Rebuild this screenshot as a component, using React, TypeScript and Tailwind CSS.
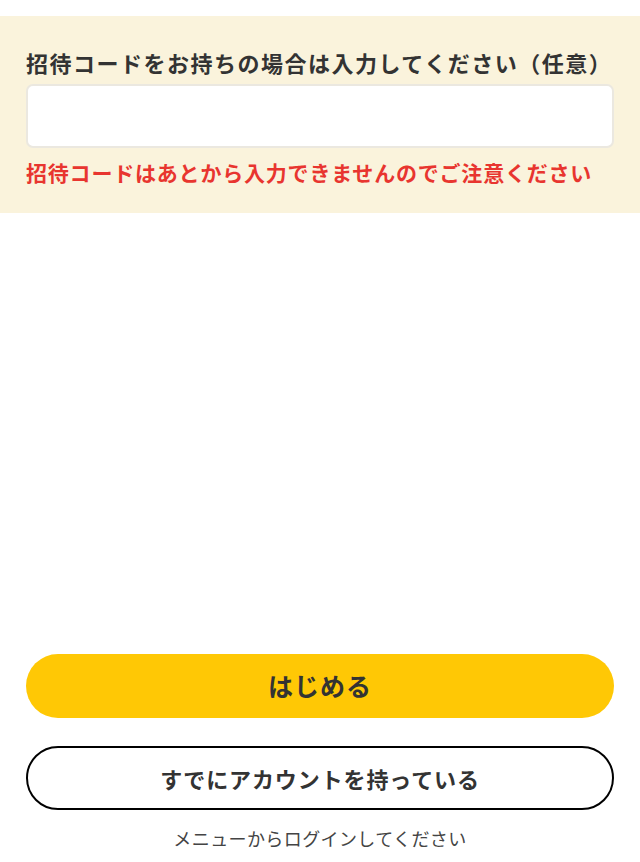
import { useState } from 'react';

export default function App() {
  const [code, setCode] = useState('');

  return (
    <div
      className="flex h-[862px] flex-col bg-white text-[#333333]"
      style={{ fontFamily: '"Noto Sans CJK JP", "Noto Sans", sans-serif' }}
    >
      <section className="mt-4 bg-[#faf3dc] px-[26px] pt-[30px] pb-[25px]">
        <label htmlFor="invite" className="block text-[22px] leading-[32px] font-bold tracking-[1.5px] text-[#333333]">
          招待コードをお持ちの場合は入力してください（任意）
        </label>
        <input
          id="invite"
          type="text"
          value={code}
          onChange={(e) => setCode(e.target.value)}
          className="mt-[6px] block h-16 w-full rounded-[7px] border-2 border-[#ebe8e0] bg-white px-4 text-[20px] outline-none"
        />
        <p className="mt-2 text-[21px] leading-[32px] font-bold tracking-[0.8px] text-[#e8352f]">
          招待コードはあとから入力できませんのでご注意ください
        </p>
      </section>

      <div className="flex-1" />

      <div className="px-[26px] pb-3">
        <button className="flex h-16 w-full items-center justify-center rounded-full bg-[#ffc805] text-[25px] font-bold tracking-[1px] text-[#333333]">
          はじめる
        </button>
        <button className="mt-7 flex h-16 w-full items-center justify-center rounded-full border-2 border-black bg-white text-[22px] font-bold tracking-[0.9px] text-[#333333]">
          すでにアカウントを持っている
        </button>
        <p className="mt-4 text-center text-[18px] leading-6 tracking-[0.4px] text-[#444444]">
          メニューからログインしてください
        </p>
      </div>
    </div>
  );
}
